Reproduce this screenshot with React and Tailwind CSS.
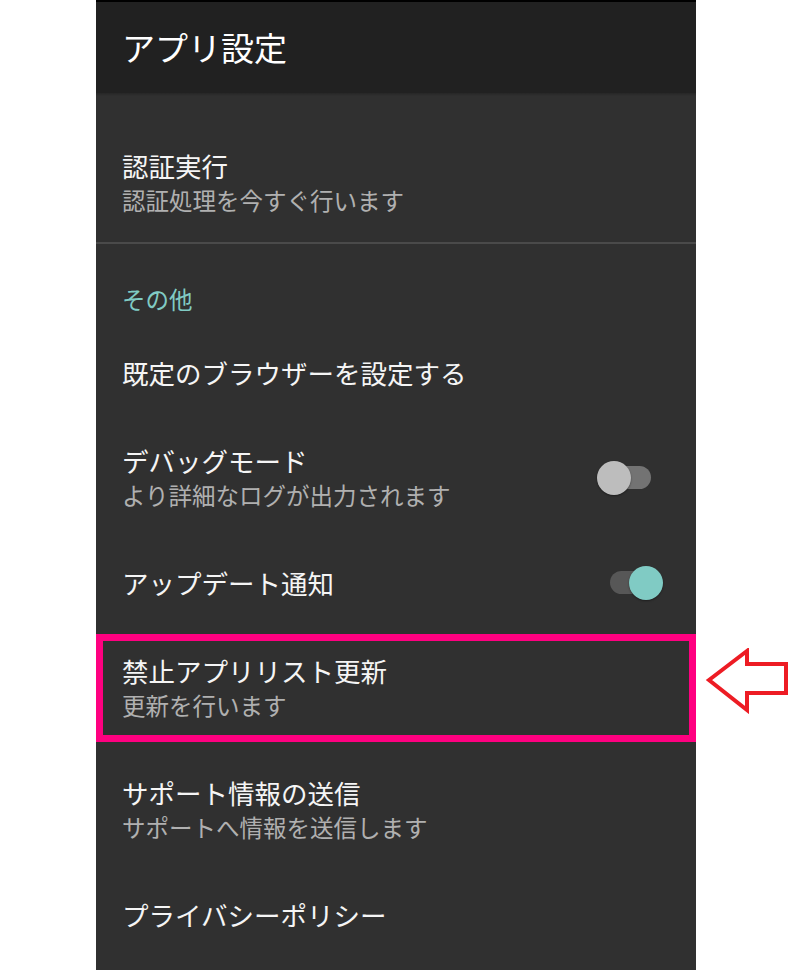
function Switch({ on }) {
  return (
    <div className="relative w-[66px] h-[34px] shrink-0">
      <div
        className={`absolute left-[13px] right-[12px] top-[5px] h-[23px] rounded-full ${
          on ? "bg-[#575757]" : "bg-[#737373]"
        }`}
      ></div>
      <div
        className={`absolute top-0 w-[34px] h-[34px] rounded-full shadow-[0_1px_2px_rgba(0,0,0,0.4)] ${
          on ? "right-0 bg-[#80cbc4]" : "left-0 bg-[#bdbdbd]"
        }`}
      ></div>
    </div>
  );
}

function PrefRow({ title, summary, height, toggle }) {
  return (
    <div className={`flex items-center pl-[26px] pr-[33px] ${height}`}>
      <div className="flex-1">
        <div className="text-[26.5px] leading-[34px] text-[#f5f5f5]">{title}</div>
        {summary && (
          <div className="text-[23.5px] leading-[34px] text-[#b0b0b0]">{summary}</div>
        )}
      </div>
      {toggle !== undefined && <Switch on={toggle} />}
    </div>
  );
}

function App() {
  return (
    <div className="h-[970px] overflow-hidden bg-white flex font-['Noto_Sans_CJK_JP','Noto_Sans',sans-serif]">
      <div className="ml-[96px] w-[600px] h-[970px] flex flex-col bg-[#303030]">
        <div className="h-[2px] bg-black"></div>
        <div className="h-[91px] bg-[#212121] flex items-center pl-[26px]">
          <span className="text-[33px] text-white">アプリ設定</span>
        </div>
        <div className="h-[3px] bg-gradient-to-b from-[#262626] to-[#303030]"></div>

        <div className="pt-[28px]">
          <PrefRow title="認証実行" summary="認証処理を今すぐ行います" height="h-[118px]" />
        </div>
        <div className="h-[2px] bg-[#4a4a4a]"></div>

        <div className="h-[82px] pl-[26px] pt-[43px]">
          <div className="text-[23.5px] leading-[24px] text-[#80cbc4]">その他</div>
        </div>
        <PrefRow title="既定のブラウザーを設定する" height="h-[94px]" />
        <PrefRow
          title="デバッグモード"
          summary="より詳細なログが出力されます"
          height="h-[116px]"
          toggle={false}
        />
        <PrefRow title="アップデート通知" height="h-[94px]" toggle={true} />

        <div className="h-[120px] pt-[4px]">
          <div className="h-[108px] border-[7px] border-[#ff0080] flex items-center pl-[19px]">
            <div>
              <div className="text-[26.5px] leading-[34px] text-[#f5f5f5]">禁止アプリリスト更新</div>
              <div className="text-[23.5px] leading-[34px] text-[#b0b0b0]">更新を行います</div>
            </div>
          </div>
        </div>

        <PrefRow title="サポート情報の送信" summary="サポートへ情報を送信します" height="h-[120px]" />
        <PrefRow title="プライバシーポリシー" height="h-[90px]" />
      </div>

      <div className="pl-[9px] pt-[648px]">
        <svg width="86" height="66" viewBox="0 0 86 66" fill="none">
          <path
            d="M4 32 L42 3 L42 16 L81 16 L81 45 L42 45 L42 62 Z"
            stroke="#ed1c24"
            strokeWidth="4"
            strokeLinejoin="miter"
          />
        </svg>
      </div>
    </div>
  );
}

export default App;
